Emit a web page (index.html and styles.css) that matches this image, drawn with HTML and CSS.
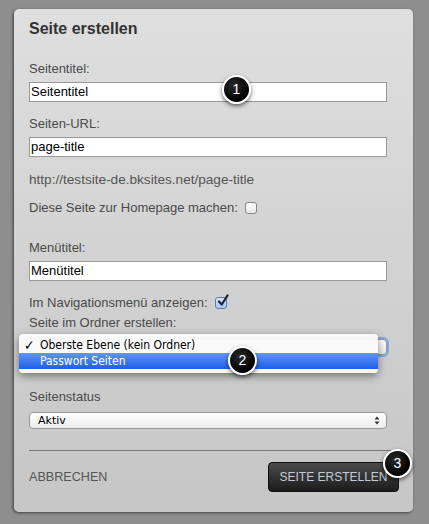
FILE: index.html
```html
<!DOCTYPE html>
<html lang="de">
<head>
    <meta charset="UTF-8">
    <meta name="viewport" content="width=device-width, initial-scale=1.0">
    <title>Seite erstellen</title>
    <link rel="stylesheet" href="styles.css">
</head>
<body>
    <div class="panel">
        <h1 class="panel-title">Seite erstellen</h1>

        <div class="label">Seitentitel:</div>
        <div class="input">Seitentitel</div>

        <div class="label">Seiten-URL:</div>
        <div class="input input-url">page-title</div>

        <div class="url-preview">http://testsite-de.bksites.net/page-title</div>

        <div class="check-row check-row-home">
            <span>Diese Seite zur Homepage machen:</span>
            <span class="checkbox"></span>
        </div>

        <div class="label">Menütitel:</div>
        <div class="input input-menu">Menütitel</div>

        <div class="check-row check-row-nav">
            <span>Im Navigationsmenü anzeigen:</span>
            <span class="checkbox checked">
                <svg width="14" height="14" viewBox="0 0 14 14">
                    <path d="M3 7.5 L5.8 10.5 L11.5 1.5" fill="none" stroke="#1a2436" stroke-width="2.2" stroke-linecap="round" stroke-linejoin="round"/>
                </svg>
            </span>
        </div>

        <div class="label label-folder">Seite im Ordner erstellen:</div>
        <div class="select-wrap">
            <div class="select select-focus"></div>
            <!-- open dropdown menu -->
            <div class="popup">
                <div class="popup-item"><span class="tick">✓</span>Oberste Ebene (kein Ordner)</div>
                <div class="popup-item active">Passwort Seiten</div>
            </div>
        </div>

        <div class="label label-status">Seitenstatus</div>
        <div class="select select-status">
            <span>Aktiv</span>
            <span class="arrows">
                <svg width="6" height="9" viewBox="0 0 6 9">
                    <path d="M0.5 3.5 L3 0.5 L5.5 3.5 Z M0.5 5.5 L3 8.5 L5.5 5.5 Z" fill="#333"/>
                </svg>
            </span>
        </div>

        <div class="divider"></div>

        <div class="footer">
            <span class="cancel">ABBRECHEN</span>
            <button class="btn-create">SEITE ERSTELLEN</button>
        </div>

        <span class="badge badge-1">1</span>
        <span class="badge badge-2">2</span>
        <span class="badge badge-3">3</span>
    </div>
</body>
</html>
```

FILE: styles.css
```css
html, body {
    height: 100%;
}
body {
    margin: 0;
    background-color: #8e8e8e;
    font-family: 'Liberation Sans', Arial, sans-serif;
    color: #444;
    overflow: hidden;
}
.panel {
    position: relative;
    box-sizing: border-box;
    width: 399px;
    height: 503px;
    margin: 9px 0 0 14px;
    padding: 10px 26px 21px 15px;
    border-radius: 5px;
    background: linear-gradient(180deg, #dfdfdf, #c6c6c6);
    box-shadow: -1px 1px 3px rgba(0, 0, 0, 0.55);
}
.panel-title {
    margin: 0 0 21px;
    font-size: 16px;
    line-height: 20px;
    font-weight: bold;
    color: #333;
}
.label, .url-preview, .check-row {
    font-size: 13px;
    line-height: 17px;
    color: #4a4a4a;
}
.label {
    margin-bottom: 5px;
}
.input {
    box-sizing: border-box;
    height: 20px;
    padding-left: 1px;
    border: 1px solid #999;
    background-color: white;
    color: black;
    font-size: 13px;
    line-height: 18px;
    margin-bottom: 13px;
}
.input-url {
    margin-bottom: 14px;
}
.url-preview {
    font-size: 13.6px;
    color: #555;
    margin-bottom: 11px;
}
.check-row {
    display: flex;
    align-items: center;
    gap: 7px;
}
.check-row-home {
    margin-bottom: 23px;
}
.check-row-nav {
    margin-bottom: 3px;
}
.checkbox {
    box-sizing: border-box;
    width: 12px;
    height: 12px;
    border: 1px solid #888;
    border-radius: 3px;
    background: linear-gradient(180deg, #fff, #e8e8e8);
    position: relative;
}
.checkbox.checked {
    border-color: #5a7ab0;
    background: linear-gradient(180deg, #d8e6fb, #a9c6f2);
}
.checkbox svg {
    position: absolute;
    left: 0;
    top: -4px;
}
.label-folder {
    margin-bottom: 8px;
}
.select-wrap {
    position: relative;
    margin-bottom: 33px;
}
.select {
    box-sizing: border-box;
    border: 1px solid #999;
    border-radius: 4px;
    background: linear-gradient(180deg, #ffffff, #ececec);
}
.select-focus {
    height: 16px;
    box-shadow: 0 0 0 2px #7fa9e0;
}
.popup {
    position: absolute;
    left: -10px;
    top: -5px;
    width: 359px;
    padding: 3px 0 4px;
    border-radius: 4px;
    background-color: rgba(250, 250, 250, 0.97);
    box-shadow: 0 3px 8px rgba(0, 0, 0, 0.45);
    font-family: 'DejaVu Sans', sans-serif;
    font-stretch: condensed;
    font-size: 12px;
    color: black;
}
.popup-item {
    height: 16px;
    line-height: 16px;
    padding-left: 21px;
    position: relative;
}
.popup-item .tick {
    position: absolute;
    left: 5px;
    font-size: 14px;
    font-weight: bold;
}
.popup-item.active {
    background: linear-gradient(180deg, #6494f4, #1d5fea);
    color: white;
}
.label-status {
    margin-bottom: 7px;
}
.select-status {
    display: flex;
    align-items: center;
    justify-content: space-between;
    height: 17px;
    padding: 0 6px 0 8px;
    font-family: 'DejaVu Sans', sans-serif;
    font-size: 11px;
    color: black;
    margin-bottom: 21px;
}
.arrows {
    display: flex;
}
.divider {
    height: 1px;
    margin-right: -12px;
    background-color: #777;
    margin-bottom: 11px;
}
.footer {
    display: flex;
    align-items: center;
    justify-content: space-between;
    margin-right: -12px;
}
.cancel {
    font-size: 12.6px;
    color: #555;
}
.btn-create {
    width: 131px;
    height: 30px;
    padding: 0;
    border: 1px solid #111;
    border-radius: 4px;
    background: linear-gradient(180deg, #4a4a4a, #1c1c1c);
    color: #c3ccd6;
    font-family: 'Liberation Sans', Arial, sans-serif;
    font-size: 12px;
}
.badge {
    position: absolute;
    box-sizing: border-box;
    width: 29px;
    height: 29px;
    border: 2px solid white;
    border-radius: 50%;
    background: radial-gradient(circle at 40% 35%, #2a2a2a, #000 70%);
    color: white;
    font-size: 14px;
    line-height: 25px;
    text-align: center;
    box-shadow: 0 2px 4px rgba(0, 0, 0, 0.6);
}
.badge-1 {
    left: 208px;
    top: 66px;
}
.badge-2 {
    left: 214px;
    top: 337px;
}
.badge-3 {
    left: 369px;
    top: 440px;
}
```
